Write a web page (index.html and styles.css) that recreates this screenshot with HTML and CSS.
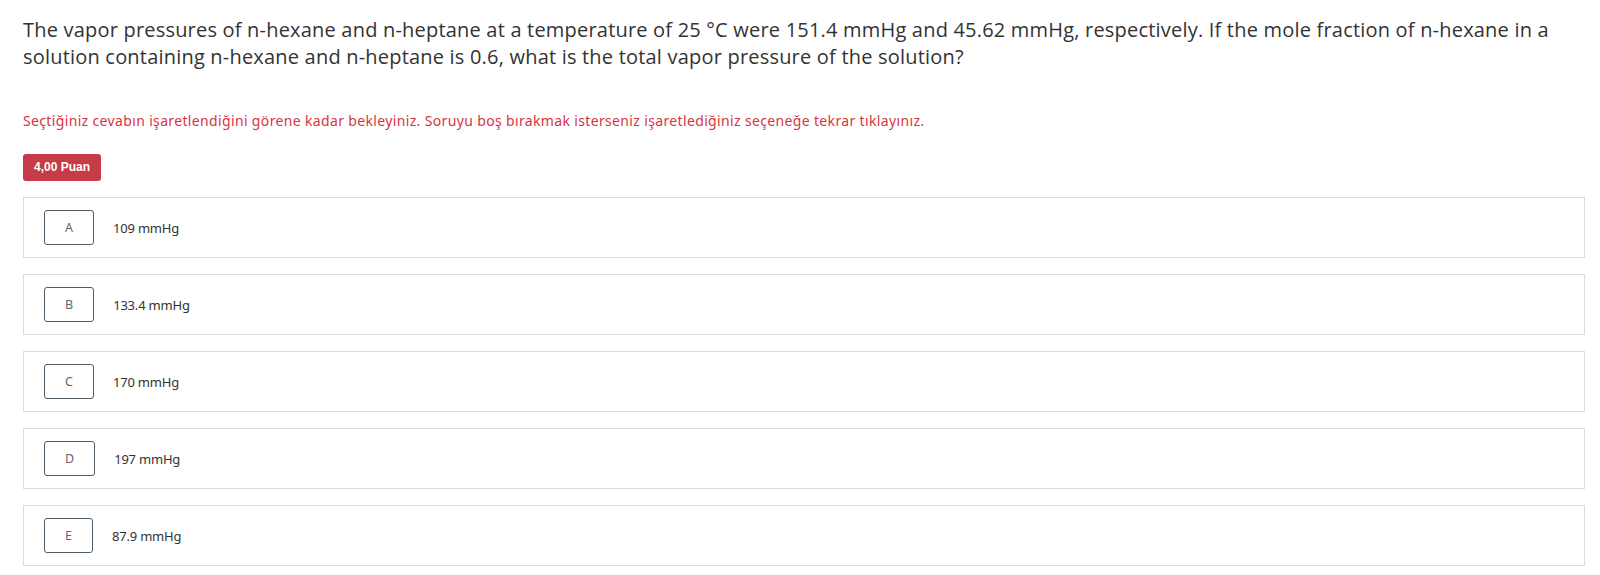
FILE: index.html
```html
<!DOCTYPE html>
<html>
<head>
<meta charset="utf-8">
<link rel="stylesheet" href="styles.css">
</head>
<body>
<div class="page">
  <div class="question">The vapor pressures of n-hexane and n-heptane at a temperature of 25 °C were 151.4 mmHg and 45.62 mmHg, respectively. If the mole fraction of n-hexane in a solution containing n-hexane and n-heptane is 0.6, what is the total vapor pressure of the solution?</div>
  <div class="notice">Seçtiğiniz cevabın işaretlendiğini görene kadar bekleyiniz. Soruyu boş bırakmak isterseniz işaretlediğiniz seçeneğe tekrar tıklayınız.</div>
  <div class="badge">4,00 Puan</div>
  <div class="options">
    <div class="option"><span class="letter">A</span><span class="answer">109 mmHg</span></div>
    <div class="option"><span class="letter">B</span><span class="answer">133.4 mmHg</span></div>
    <div class="option"><span class="letter">C</span><span class="answer">170 mmHg</span></div>
    <div class="option"><span class="letter">D</span><span class="answer">197 mmHg</span></div>
    <div class="option"><span class="letter">E</span><span class="answer">87.9 mmHg</span></div>
  </div>
</div>
</body>
</html>
```
FILE: styles.css
```css
html, body {
  margin: 0;
  padding: 0;
  background: #ffffff;
}
.page {
  padding: 16px 15px 0 23px;
}
.question {
  font-family: "Open Sans", sans-serif;
  font-size: 20px;
  letter-spacing: 0.2px;
  line-height: 27px;
  color: #333333;
}
.notice {
  margin-top: 42px;
  font-family: "Noto Sans", sans-serif;
  font-size: 14px;
  letter-spacing: 0.35px;
  line-height: 18px;
  color: #d9333f;
}
.badge {
  display: inline-block;
  margin-top: 24px;
  padding: 0 11px;
  height: 27px;
  line-height: 27px;
  background: #c63b47;
  color: #ffffff;
  border-radius: 3px;
  font-family: "Liberation Sans", Arial, sans-serif;
  font-weight: bold;
  font-size: 12px;
}
.options {
  margin-top: 16px;
  display: flex;
  flex-direction: column;
  gap: 16px;
}
.option {
  display: flex;
  align-items: center;
  height: 59px;
  border: 1px solid #dcdcdc;
  padding-left: 20px;
  font-family: "Noto Sans", sans-serif;
}
.letter {
  box-sizing: border-box;
  height: 35px;
  padding: 0 20px;
  border: 1px solid #4f5d68;
  border-radius: 3px;
  display: flex;
  align-items: center;
  justify-content: center;
  font-size: 12.5px;
  color: #666666;
}
.answer {
  margin-left: 19px;
  font-size: 13px;
  letter-spacing: -0.2px;
  color: #333333;
}
```
